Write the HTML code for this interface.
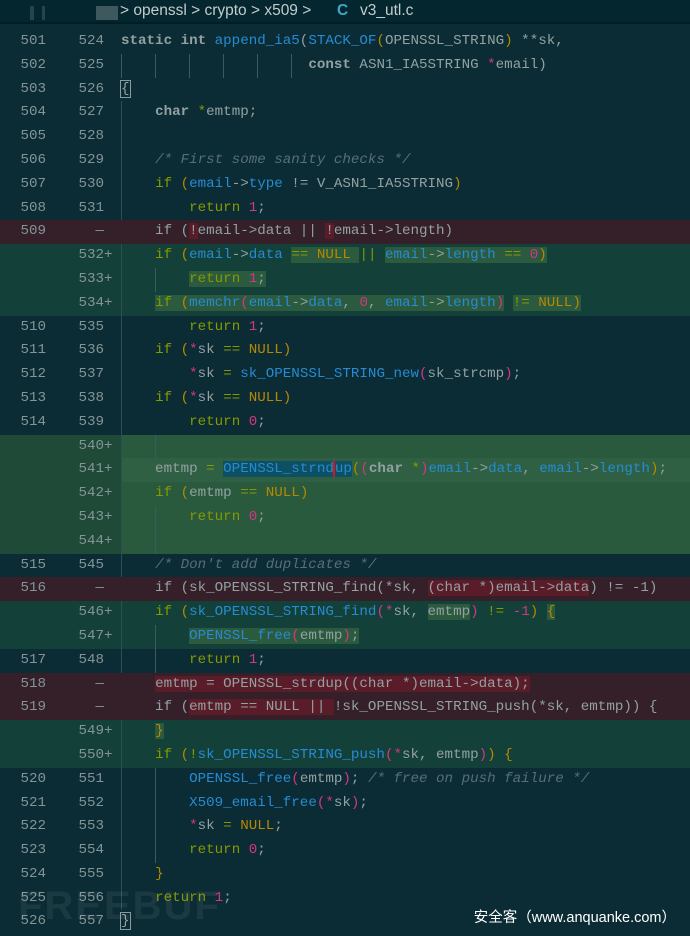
<!DOCTYPE html>
<html><head><meta charset="utf-8"><style>
*{margin:0;padding:0;box-sizing:border-box}
body{width:690px;height:936px;background:#0b2c35;overflow:hidden;position:relative;font-family:"Liberation Mono","DejaVu Sans Mono",monospace;font-size:14.2px;color:#93a1a1}
.hdr{position:absolute;left:0;top:0;width:690px;height:24px;background:#03262f;font-family:"Liberation Sans",sans-serif;font-size:15.5px;color:#c3cccc;border-bottom:2px solid #021c24}
.hdr span{position:absolute;top:2px}
.blob{position:absolute;background:#7c8a8e;opacity:.5;top:6px;height:14px}
.rows{position:absolute;left:0;top:30px;width:690px}
.r{height:23.81px;line-height:23.81px;position:relative;white-space:pre}
.o,.n{position:absolute;top:0;color:#839496;text-align:right}
.o{left:0;width:46px}
.n{left:60px;width:44px}
.pl{position:absolute;left:104px;top:0;color:#839496}
.c{position:absolute;left:121px;top:0;height:23.81px;border-left:1px solid #2f4d55}
.c2{position:absolute;left:121px;top:0}
.del{background:#35202a}
.add{background:#14403a}
.blk{background:#1f4a37}
.blk .cbg{position:absolute;left:121px;top:0;right:0;height:100%;background:#2a5a3e}
.hl541 .cbg{background:#2f6043}
.wd{background:#5a1c29}
.wa{background:#2b5a3f}
.sel{background:#0d4f63}
.k{color:#859900}.b{color:#268bd2}.y{color:#b58900}.p{color:#d33682}.cm{color:#586e75;font-style:italic}.bo{font-weight:bold}
.gd{display:inline-block;width:0;height:23.81px;border-left:1px solid #3c5a60;vertical-align:top;margin-right:-1px}
.box{outline:1px solid #8a9a9a}
.wm{position:absolute;right:14px;top:906px;color:#fff;font-family:"Liberation Sans","Noto Sans CJK SC",sans-serif;font-size:14.5px}
.fb{position:absolute;left:18px;top:884px;font-family:"Liberation Sans",sans-serif;font-weight:bold;font-size:40px;color:#fff;opacity:.06;letter-spacing:2px}
</style></head><body>
<div class="hdr">
<div class="blob" style="left:30px;width:4px;opacity:.3"></div>
<div class="blob" style="left:42px;width:3px;opacity:.3"></div>
<div class="blob" style="left:96px;width:22px"></div>
<span style="left:120px">&gt; openssl &gt; crypto &gt; x509 &gt;</span>
<span style="left:337px;color:#3fa9c9;font-weight:bold">C</span>
<span style="left:360px">v3_utl.c</span>
</div>
<div class="rows">
<div class="r"><span class="o">501</span><span class="n">524</span><span class="c2"><span class="bo">static int</span> <span class="b">append_ia5</span>(<span class="b">STACK_OF</span><span class="y">(</span>OPENSSL_STRING<span class="y">)</span> **sk,</span></div>
<div class="r"><span class="o">502</span><span class="n">525</span><span class="c2"><span class="gd"></span>    <span class="gd"></span>    <span class="gd"></span>    <span class="gd"></span>    <span class="gd"></span>    <span class="gd"></span>  <span class="bo">const</span> ASN1_IA5STRING <span class="p">*</span>email)</span></div>
<div class="r"><span class="o">503</span><span class="n">526</span><span class="c2"><span class="box">{</span></span></div>
<div class="r"><span class="o">504</span><span class="n">527</span><span class="c"></span><span class="c2">    <span class="bo">char</span> <span class="k">*</span>emtmp;</span></div>
<div class="r"><span class="o">505</span><span class="n">528</span><span class="c"></span></div>
<div class="r"><span class="o">506</span><span class="n">529</span><span class="c"></span><span class="c2">    <span class="cm">/* First some sanity checks */</span></span></div>
<div class="r"><span class="o">507</span><span class="n">530</span><span class="c"></span><span class="c2">    <span class="k">if</span> <span class="y">(</span><span class="b">email</span>-&gt;<span class="b">type</span> != V_ASN1_IA5STRING<span class="y">)</span></span></div>
<div class="r"><span class="o">508</span><span class="n">531</span><span class="c"></span><span class="c2">        <span class="k">return</span> <span class="p">1</span>;</span></div>
<div class="r del"><span class="o">509</span><span class="n">—</span><span class="c2">    if (<span class="wd">!</span>email-&gt;data || <span class="wd">!</span>email-&gt;length)</span></div>
<div class="r add"><span class="n">532</span><span class="pl">+</span><span class="c"></span><span class="c2">    <span class="k">if</span> <span class="y">(</span><span class="b">email</span>-&gt;<span class="b">data</span> <span class="wa"><span class="k">==</span> <span class="y">NULL</span> </span><span class="k">||</span> <span class="wa"><span class="b">email</span>-&gt;<span class="b">length</span> <span class="k">==</span> <span class="p">0</span><span class="y">)</span></span></span></div>
<div class="r add"><span class="n">533</span><span class="pl">+</span><span class="c"></span><span class="c2">    <span class="gd"></span>    <span class="wa"><span class="k">return</span> <span class="p">1</span>;</span></span></div>
<div class="r add"><span class="n">534</span><span class="pl">+</span><span class="c"></span><span class="c2">    <span class="wa"><span class="k">if</span> <span class="y">(</span><span class="b">memchr</span><span class="p">(</span><span class="b">email</span>-&gt;<span class="b">data</span>, <span class="p">0</span>, <span class="b">email</span>-&gt;<span class="b">length</span><span class="p">)</span></span> <span class="wa"><span class="k">!=</span> <span class="y">NULL)</span></span></span></div>
<div class="r"><span class="o">510</span><span class="n">535</span><span class="c"></span><span class="c2">        <span class="k">return</span> <span class="p">1</span>;</span></div>
<div class="r"><span class="o">511</span><span class="n">536</span><span class="c"></span><span class="c2">    <span class="k">if</span> <span class="y">(</span><span class="p">*</span>sk <span class="k">==</span> <span class="y">NULL)</span></span></div>
<div class="r"><span class="o">512</span><span class="n">537</span><span class="c"></span><span class="c2">        <span class="p">*</span>sk <span class="k">=</span> <span class="b">sk_OPENSSL_STRING_new</span><span class="p">(</span>sk_strcmp<span class="p">)</span>;</span></div>
<div class="r"><span class="o">513</span><span class="n">538</span><span class="c"></span><span class="c2">    <span class="k">if</span> <span class="y">(</span><span class="p">*</span>sk <span class="k">==</span> <span class="y">NULL)</span></span></div>
<div class="r"><span class="o">514</span><span class="n">539</span><span class="c"></span><span class="c2">        <span class="k">return</span> <span class="p">0</span>;</span></div>
<div class="r blk"><span class="cbg"></span><span class="n">540</span><span class="pl">+</span><span class="c"></span><span class="c2">    <span class="gd"></span></span></div>
<div class="r blk hl541"><span class="cbg"></span><span class="n">541</span><span class="pl">+</span><span class="c"></span><span class="c2">    emtmp <span class="k">=</span> <span class="sel"><span class="b">OPENSSL_strnd<span style="border-left:2px solid #e01020;margin-left:-1px"></span>up</span></span><span class="y">(</span><span class="p">(</span><span class="bo">char</span> <span class="k">*</span><span class="p">)</span><span class="b">email</span>-&gt;<span class="b">data</span>, <span class="b">email</span>-&gt;<span class="b">length</span><span class="y">)</span>;</span></div>
<div class="r blk"><span class="cbg"></span><span class="n">542</span><span class="pl">+</span><span class="c"></span><span class="c2">    <span class="k">if</span> <span class="y">(</span>emtmp <span class="k">==</span> <span class="y">NULL)</span></span></div>
<div class="r blk"><span class="cbg"></span><span class="n">543</span><span class="pl">+</span><span class="c"></span><span class="c2">    <span class="gd"></span>    <span class="k">return</span> <span class="p">0</span>;</span></div>
<div class="r blk"><span class="cbg"></span><span class="n">544</span><span class="pl">+</span><span class="c"></span><span class="c2">    <span class="gd"></span></span></div>
<div class="r"><span class="o">515</span><span class="n">545</span><span class="c"></span><span class="c2">    <span class="cm">/* Don't add duplicates */</span></span></div>
<div class="r del"><span class="o">516</span><span class="n">—</span><span class="c2">    if (sk_OPENSSL_STRING_find(*sk, <span class="wd">(char *)email-&gt;data</span>) != -1)</span></div>
<div class="r add"><span class="n">546</span><span class="pl">+</span><span class="c"></span><span class="c2">    <span class="k">if</span> <span class="y">(</span><span class="b">sk_OPENSSL_STRING_find</span><span class="p">(*</span>sk, <span class="wa">emtmp</span><span class="p">)</span> <span class="k">!=</span> <span class="p">-1</span><span class="y">)</span> <span class="wa"><span class="y">{</span></span></span></div>
<div class="r add"><span class="n">547</span><span class="pl">+</span><span class="c"></span><span class="c2">    <span class="gd"></span>    <span class="wa"><span class="b">OPENSSL_free</span><span class="p">(</span>emtmp<span class="p">)</span>;</span></span></div>
<div class="r"><span class="o">517</span><span class="n">548</span><span class="c"></span><span class="c2">    <span class="gd"></span>    <span class="k">return</span> <span class="p">1</span>;</span></div>
<div class="r del"><span class="o">518</span><span class="n">—</span><span class="c2">    <span class="wd">emtmp = OPENSSL_strdup((char *)email-&gt;data);</span></span></div>
<div class="r del"><span class="o">519</span><span class="n">—</span><span class="c2">    if (<span class="wd">emtmp == NULL || </span>!sk_OPENSSL_STRING_push(*sk, emtmp)) {</span></div>
<div class="r add"><span class="n">549</span><span class="pl">+</span><span class="c"></span><span class="c2">    <span class="wa"><span class="y">}</span></span></span></div>
<div class="r add"><span class="n">550</span><span class="pl">+</span><span class="c"></span><span class="c2">    <span class="k">if</span> <span class="y">(</span><span class="k">!</span><span class="b">sk_OPENSSL_STRING_push</span><span class="p">(*</span>sk, emtmp<span class="p">)</span><span class="y">)</span> <span class="y">{</span></span></div>
<div class="r"><span class="o">520</span><span class="n">551</span><span class="c"></span><span class="c2">    <span class="gd"></span>    <span class="b">OPENSSL_free</span><span class="p">(</span>emtmp<span class="p">)</span>; <span class="cm">/* free on push failure */</span></span></div>
<div class="r"><span class="o">521</span><span class="n">552</span><span class="c"></span><span class="c2">    <span class="gd"></span>    <span class="b">X509_email_free</span><span class="p">(*</span>sk<span class="p">)</span>;</span></div>
<div class="r"><span class="o">522</span><span class="n">553</span><span class="c"></span><span class="c2">    <span class="gd"></span>    <span class="p">*</span>sk <span class="k">=</span> <span class="y">NULL</span>;</span></div>
<div class="r"><span class="o">523</span><span class="n">554</span><span class="c"></span><span class="c2">    <span class="gd"></span>    <span class="k">return</span> <span class="p">0</span>;</span></div>
<div class="r"><span class="o">524</span><span class="n">555</span><span class="c"></span><span class="c2">    <span class="y">}</span></span></div>
<div class="r"><span class="o">525</span><span class="n">556</span><span class="c"></span><span class="c2">    <span class="k">return</span> <span class="p">1</span>;</span></div>
<div class="r"><span class="o">526</span><span class="n">557</span><span class="c2"><span class="box">}</span></span></div>
</div>
<div class="fb">FREEBUF</div>
<div class="wm">安全客（www.anquanke.com）</div>
</body></html>
